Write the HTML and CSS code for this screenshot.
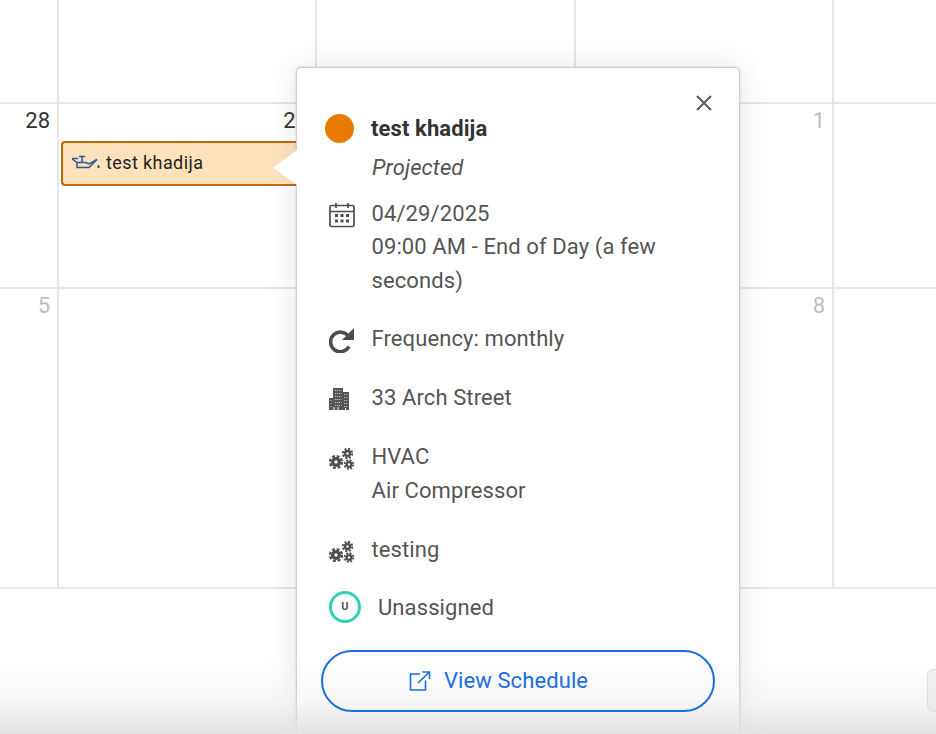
FILE: index.html
```html
<!DOCTYPE html>
<html lang="en">
<head>
<meta charset="utf-8">
<title>Calendar</title>
<link rel="stylesheet" href="styles.css">
</head>
<body>
<svg class="defs" width="0" height="0" aria-hidden="true">
  <symbol id="gears" viewBox="0 0 26 24">
    <g fill="none" stroke="#4d4d4d">
      <circle cx="7" cy="15" r="3.400" stroke-width="3.400"/>
      <circle cx="7" cy="15" r="6" stroke-width="2.200" stroke-dasharray="2.800 1.910"/>
      <circle cx="18.500" cy="6.500" r="2.500" stroke-width="2.400"/>
      <circle cx="18.500" cy="6.500" r="4.700" stroke-width="2" stroke-dasharray="2.100 1.590"/>
      <circle cx="20" cy="17.500" r="2.300" stroke-width="2.200"/>
      <circle cx="20" cy="17.500" r="4.300" stroke-width="1.900" stroke-dasharray="2 1.380"/>
    </g>
  </symbol>
</svg>
<main class="calendar">
  <div class="cell"></div><div class="cell"></div><div class="cell"></div><div class="cell"></div><div class="cell last"></div>
  <div class="cell"><span class="num">28</span></div>
  <div class="cell"><span class="num">29</span>
    <div class="chip">
      <svg class="oil" width="29" height="18" viewBox="0 0 29 18" fill="none" stroke="#2b5c8f" stroke-width="1.500">
        <path d="M1 4.500h6M8 2.500h6M11 2.500V8M1 5l5 3.500h9l3 1.500 8-4.500-8 8H6V8.500"/>
        <path d="M27.500 10.500c-.8 1.300-1.200 2-1.200 2.600a1.200 1.200 0 0 0 2.400 0c0-.6-.4-1.300-1.200-2.600z" fill="#2b5c8f" stroke="none"/>
      </svg>
      <span>test khadija</span>
    </div>
  </div>
  <div class="cell"></div>
  <div class="cell"><span class="num muted">1</span></div>
  <div class="cell last"></div>
  <div class="cell"><span class="num muted">5</span></div>
  <div class="cell"></div><div class="cell"></div>
  <div class="cell"><span class="num muted">8</span></div>
  <div class="cell last"></div>
</main>
<div class="rule"></div>

<div class="side-tab"></div>

<section class="popover">
  <span class="arrow"></span>
  <button class="close" aria-label="Close">
    <svg width="18" height="18" viewBox="0 0 18 18" stroke="#5f5f5f" stroke-width="2.200" fill="none"><path d="M2 2l14 14M16 2L2 16"/></svg>
  </button>
  <div class="title-row"><span class="dot"></span><strong>test khadija</strong></div>
  <div class="status">Projected</div>
  <div class="stack">
    <div class="row">
      <svg class="icon" width="26" height="26" viewBox="0 0 26 26" fill="none" stroke="#4d4d4d" stroke-width="1.700">
        <rect x="1" y="3.500" width="24" height="21" rx="1.500"/>
        <path d="M1 9.500h24M7 1v5M19 1v5"/>
        <g fill="#4d4d4d" stroke="none">
          <rect x="6" y="12" width="3" height="3"/><rect x="11.500" y="12" width="3" height="3"/><rect x="17" y="12" width="3" height="3"/>
          <rect x="6" y="17.500" width="3" height="3"/><rect x="11.500" y="17.500" width="3" height="3"/><rect x="17" y="17.500" width="3" height="3"/>
        </g>
      </svg>
      <div>04/29/2025<br>09:00 AM - End of Day (a few seconds)</div>
    </div>
    <div class="row">
      <svg class="icon" width="26" height="26" viewBox="0 0 26 26" fill="none">
        <path d="M19.500 9.500A9.800 9.800 0 1 0 20 19.500" stroke="#4d4d4d" stroke-width="3.600"/>
        <path d="M25 1v12H13z" fill="#4d4d4d"/>
      </svg>
      <div>Frequency: monthly</div>
    </div>
    <div class="row">
      <svg class="icon" width="26" height="26" viewBox="0 0 26 26">
        <path d="M0 12h4V2h10v4h6v18H0z" fill="#555"/>
        <path d="M6 4.500h6.500M6 7.500h6.500M6 10.500h6.500M6 13.500h6.500M6 16.500h6.500M6 19.500h6.500M1.500 14.500h2M1.500 17.500h2M1.500 20.500h2M15 8.500h3.500M15 11.500h3.500M15 14.500h3.500M15 17.500h3.500M15 20.500h3.500" stroke="#bcbcbc" stroke-width="1" stroke-dasharray="1.200 .8"/>
        <path d="M5 24v-3M9 24v-3M16.500 24v-2" stroke="#fff" stroke-width="1"/>
      </svg>
      <div>33 Arch Street</div>
    </div>
    <div class="row">
      <svg class="icon gear" width="26" height="24"><use href="#gears"/></svg>
      <div>HVAC<br>Air Compressor</div>
    </div>
    <div class="row">
      <svg class="icon gear" width="26" height="24"><use href="#gears"/></svg>
      <div>testing</div>
    </div>
    <div class="row assignee">
      <span class="avatar">U</span>
      <div>Unassigned</div>
    </div>
  </div>
  <a class="view" href="#">
    <svg width="22" height="20" viewBox="0 0 22 20" fill="none" stroke="#1a6fdc" stroke-width="1.600"><path d="M11 3H1.500v16h15V9.500M9 12L20.500 1M13.500 1h7v7"/></svg>
    <span>View Schedule</span>
  </a>
</section>
<div class="fade"></div>
</body>
</html>
```
FILE: styles.css
```css
html, body {
  margin: 0;
  height: 734px;
  overflow: hidden;
  background: #fff;
  font-family: Roboto, "Liberation Sans", sans-serif;
}
.defs { position: absolute; }
.calendar {
  display: grid;
  grid-template-columns: 59px 258px 259px 258px 102px;
  grid-template-rows: 104px 185px 298px;
  width: 936px;
}
.cell {
  border-right: 2px solid #e6e6e6;
  border-bottom: 2px solid #e6e6e6;
  box-sizing: border-box;
  padding: 4px 7px;
  text-align: right;
  min-width: 0;
}
.cell.last { border-right: 0; }
.calendar > .cell:nth-last-child(-n+5) { border-bottom: 0; }
.rule { height: 2px; background: #e6e6e6; }
.num {
  font-size: 22px;
  line-height: 25px;
  color: #333;
  display: block;
}
.num.muted { color: #bdbdbd; }
.chip {
  display: flex;
  align-items: center;
  gap: 6px;
  box-sizing: border-box;
  height: 45px;
  margin: 8px -7px 0 -5px;
  padding: 0 0 2px 8px;
  border: 2px solid #c4660f;
  border-right: 0;
  border-radius: 4px 0 0 4px;
  background: #fde2bc;
  color: #222;
  font-size: 18px;
  letter-spacing: .4px;
  text-align: left;
}
.side-tab {
  position: absolute;
  left: 927px;
  top: 669px;
  width: 20px;
  height: 43px;
  box-sizing: border-box;
  border: 1px solid #ddd;
  border-radius: 6px;
  background: #f1f1f1;
}
.popover {
  position: absolute;
  left: 296px;
  top: 67px;
  width: 444px;
  height: 700px;
  box-sizing: border-box;
  padding: 44px 24px 0 28px;
  background: #fff;
  border: 1px solid #cfcfcf;
  border-radius: 5px;
  box-shadow: 0 0 2px rgba(0, 0, 0, .2), 0 0 30px rgba(0, 0, 0, .1);
  color: #555;
  font-size: 22px;
  letter-spacing: .1px;
  line-height: 33.500px;
}
.arrow {
  position: absolute;
  left: -24px;
  top: 82px;
  width: 24px;
  height: 35px;
  background: #fff;
  clip-path: polygon(100% 0, 100% 100%, 0 50%);
}
.close {
  position: absolute;
  right: 26px;
  top: 26px;
  width: 18px;
  height: 18px;
  padding: 0;
  border: 0;
  background: none;
  line-height: 0;
}
.title-row {
  display: flex;
  align-items: center;
  gap: 17px;
  color: #333;
}
.title-row strong { font-weight: 700; }
.dot {
  width: 29px;
  height: 29px;
  border-radius: 50%;
  background: #e87a00;
}
.status {
  margin: 5px 0 12.500px 47px;
  font-style: italic;
}
.stack {
  display: flex;
  flex-direction: column;
  gap: 25.400px;
  padding-left: 4px;
}
.row {
  display: flex;
  align-items: flex-start;
  gap: 16.500px;
}
.icon {
  flex: none;
  margin-top: 5px;
}
.gear { margin-top: 7px; }
.assignee { gap: 17px; }
.avatar {
  flex: none;
  width: 32px;
  height: 32px;
  box-sizing: border-box;
  border: 3px solid #2fd1b3;
  border-radius: 50%;
  color: #555;
  font-size: 11px;
  font-weight: 700;
  line-height: 26px;
  text-align: center;
}
.view {
  position: relative;
  z-index: 2;
  display: flex;
  align-items: center;
  justify-content: center;
  gap: 13px;
  box-sizing: border-box;
  width: 394px;
  height: 62px;
  margin: 25px 0 0 -4px;
  padding-right: 39px;
  border: 2px solid #1a6fdc;
  border-radius: 31px;
  color: #1a6fdc;
  text-decoration: none;
}
.fade {
  position: absolute;
  z-index: 1;
  left: 0;
  right: 0;
  bottom: 0;
  height: 76px;
  background: linear-gradient(rgba(225, 225, 225, 0), rgba(225, 225, 225, .25) 55%, rgba(225, 225, 225, .95));
  pointer-events: none;
}
```
